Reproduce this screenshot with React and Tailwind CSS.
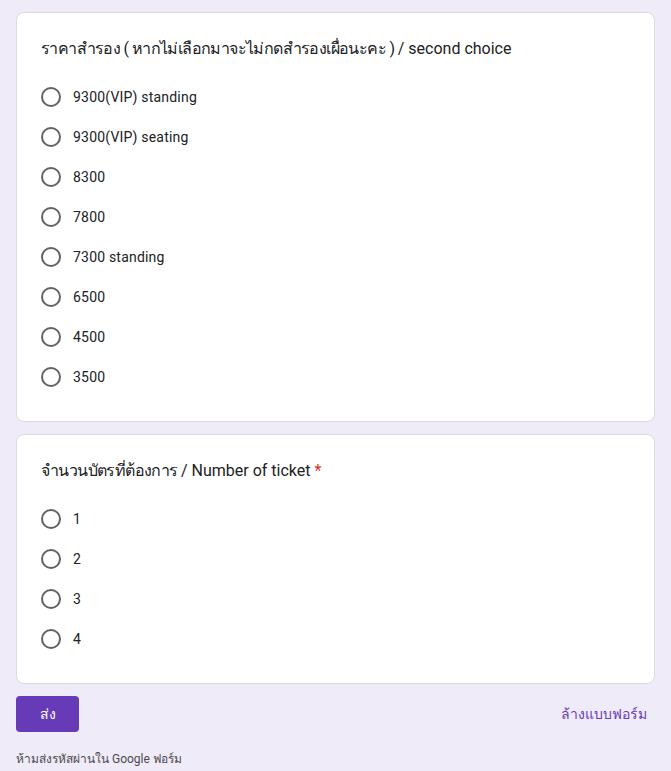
import React from "react";

const font = { fontFamily: 'Roboto, "Noto Sans", "Liberation Sans", sans-serif' };

function Radio({ label }) {
  return (
    <div className="flex items-center h-10">
      <div className="w-5 h-5 rounded-full border-2 border-[#5f6368] shrink-0" />
      <span className="ml-3 text-[14px] text-[#202124] tracking-[0.2px]">{label}</span>
    </div>
  );
}

function Card({ thai, eng, required, options }) {
  return (
    <div className="bg-white border border-[#dadce0] rounded-lg px-6 pt-6 pb-6">
      <div className="text-[16px] leading-6 text-[#202124]">
        <span className="tracking-[-0.6px]">{thai}</span>
        {eng}
        {required && <span className="text-[#d93025] ml-1">*</span>}
      </div>
      <div className="mt-4 flex flex-col">
        {options.map((o) => (
          <Radio key={o} label={o} />
        ))}
      </div>
    </div>
  );
}

export default function App() {
  return (
    <div className="min-h-[771px] bg-[#f0ebf8] px-4 pt-3" style={font}>
      <Card
        thai="ราคาสำรอง ( หากไม่เลือกมาจะไม่กดสำรองเผื่อนะคะ ) "
        eng="/ second choice"
        options={[
          "9300(VIP) standing",
          "9300(VIP) seating",
          "8300",
          "7800",
          "7300 standing",
          "6500",
          "4500",
          "3500",
        ]}
      />
      <div className="h-3" />
      <Card
        thai="จำนวนบัตรที่ต้องการ "
        eng="/ Number of ticket"
        required
        options={["1", "2", "3", "4"]}
      />
      <div className="mt-3 flex items-center justify-between">
        <button className="h-9 w-[63px] rounded bg-[#673ab7] text-white text-[14px] font-medium">
          ส่ง
        </button>
        <button className="text-[14px] font-medium text-[#673ab7] pr-2">ล้างแบบฟอร์ม</button>
      </div>
      <div className="mt-[18px] text-[12px] text-[#202124] opacity-80">
        ห้ามส่งรหัสผ่านใน Google ฟอร์ม
      </div>
    </div>
  );
}
